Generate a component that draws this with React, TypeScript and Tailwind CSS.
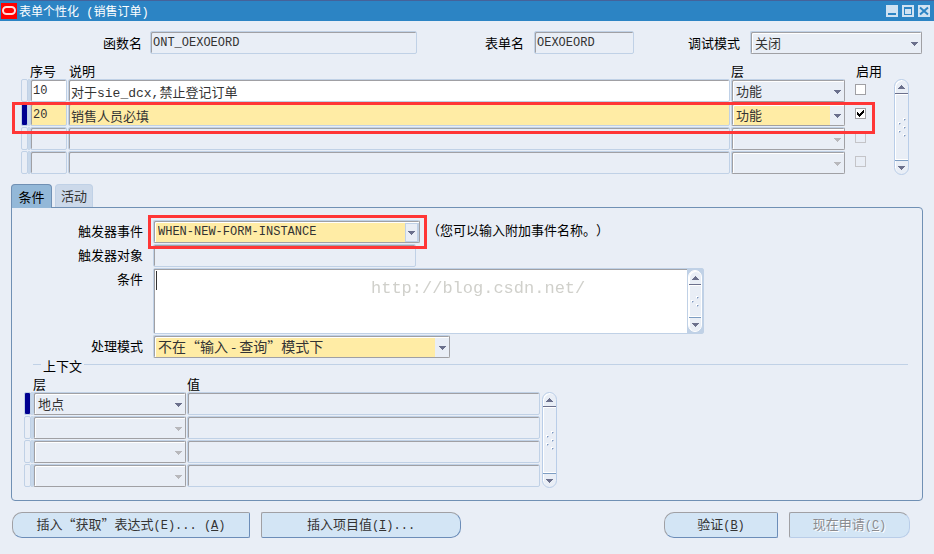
import React, { useState } from 'react'
import clsx from 'clsx'

interface IRule {
  id: number
  seq: string
  description: string
  level: string
  enabled: boolean
}

const rules: IRule[] = [
  { id: 1, seq: '10', description: '对于sie_dcx,禁止登记订单', level: '功能', enabled: false },
  { id: 2, seq: '20', description: '销售人员必填', level: '功能', enabled: true },
  { id: 3, seq: '', description: '', level: '', enabled: false },
  { id: 4, seq: '', description: '', level: '', enabled: false },
]

const contexts = ['地点', '', '', '']

const cjk = "font-['Noto_Sans_CJK_SC',sans-serif] text-[13px]"
const cjkWide = "font-['Noto_Sans_CJK_SC',sans-serif] text-[14px]"
const mono = "font-['Liberation_Mono','Noto_Sans_CJK_SC',monospace] text-[12px]"
const monoWide = "font-['Liberation_Mono','Noto_Sans_CJK_SC',monospace] text-[13px]"

const fieldStyle =
  'block h-[23px] w-full rounded-[2px] border border-[#c0d1e6] pt-px pb-0 pl-[2px] text-[#333] shadow-[inset_1px_1px_0_#a0a0a4] outline-none'

interface FieldProps extends React.InputHTMLAttributes<HTMLInputElement> {
  font?: string
  bg?: string
}

function Field({ font = mono, bg = 'bg-transparent', ...props }: FieldProps) {
  return <input type="text" className={clsx(fieldStyle, font, bg)} {...props} />
}

interface DropDownProps {
  id?: string
  label?: string
  value: string
  font?: string
  highlight?: boolean
  combo?: boolean
  disabled?: boolean
}

function DropDown({ id, label, value, font = cjk, highlight, combo, disabled }: DropDownProps) {
  return (
    <div className="relative w-full">
      <select
        id={id}
        aria-label={label}
        disabled={disabled}
        defaultValue={value}
        className={clsx(
          'block h-[23px] w-full appearance-none rounded-[2px] border border-t-[#c0d1e6] border-r-[#a0a0a4] border-b-[#a0a0a4] border-l-[#c0d1e6] py-0 pl-[4px] text-[#333] shadow-[inset_1px_1px_0_#a0a0a4,inset_2px_2px_0_#fff] outline-none disabled:opacity-100',
          font,
          highlight ? 'bg-[#ffeca5]' : 'bg-[#e9eef6]',
        )}
      >
        <option value={value}>{value}</option>
      </select>
      <span
        className={clsx(
          'pointer-events-none absolute top-[3px] right-px bottom-px flex w-[14px] items-center justify-center',
          combo ? 'border border-r-2 border-[#c0d1e6] bg-[#e9eef6]' : 'bg-[#e9eef6]',
        )}
      >
        <Arrow color={disabled ? 'fill-[#b8b8bc]' : 'fill-[#6b708c]'} />
      </span>
    </div>
  )
}

function Arrow({ up, color = 'fill-[#6b708c]' }: { up?: boolean; color?: string }) {
  return (
    <svg viewBox="0 0 7 4" className={clsx('h-[4px] w-[7px] shrink-0', color)} shapeRendering="crispEdges">
      {up ? <path d="M3 0h1v1h1v1h1v1h1v1H0V3h1V2h1V1h1z" /> : <path d="M0 0h7v1H6v1H5v1H4v1H3V3H2V2H1V1H0z" />}
    </svg>
  )
}

function Grip({ rows }: { rows: number[][] }) {
  return (
    <svg viewBox="0 0 8 19" className="h-[19px] w-[8px]" shapeRendering="crispEdges">
      {rows.map(([x, y]) => (
        <g key={`${x}-${y}`}>
          <path d={`M${x} ${y}h2v2h-2z`} fill="#fff" />
          <path d={`M${x + 1} ${y + 1}h1v1h-1z`} fill="#7f98c0" />
          <path d={`M${x + 2} ${y + 1}h1v1h-1z M${x + 1} ${y + 2}h1v1h-1z`} fill="#b9c8de" />
        </g>
      ))}
    </svg>
  )
}

const longGrip = [[5, 0], [0, 4], [5, 8], [0, 12], [5, 16]]
const shortGrip = [[5, 4], [0, 8], [5, 12]]

function ScrollBar({ short }: { short?: boolean }) {
  return (
    <div
      className={clsx(
        'flex shrink-0 flex-col overflow-hidden rounded-full border bg-[#e9eef6] shadow-[inset_1px_1px_0_#fff]',
        short ? 'h-full w-[14px] border-white' : 'h-[96px] w-[15px] border-[#b9cde8]',
      )}
    >
      <button type="button" aria-label="向上滚动" className="flex h-[14px] w-full items-center justify-center border-b border-[#6b708c]">
        <Arrow up />
      </button>
      <div className="flex flex-1 items-center justify-center border-t border-b border-white">
        <Grip rows={short ? shortGrip : longGrip} />
      </div>
      <button type="button" aria-label="向下滚动" className="flex h-[14px] w-full items-center justify-center border-t border-[#7d9dc2]">
        <Arrow />
      </button>
    </div>
  )
}

function Marker({ active }: { active?: boolean }) {
  return (
    <div className="h-[23px] w-[9px] border-r-2 border-[#c8d8ea]">
      <div
        className={clsx(
          'h-[23px] w-[7px] rounded-[2px] border border-[#c0d1e6]',
          active && 'bg-[#000090]',
        )}
      />
    </div>
  )
}

function RulesTable() {
  const [enabled, setEnabled] = useState<boolean[]>(rules.map((rule) => rule.enabled))

  const handleToggle = (index: number) => {
    setEnabled(enabled.map((value, i) => (i === index ? !value : value)))
  }

  return (
    <div className="relative min-w-0 flex-1">
      <table className="w-full table-fixed border-collapse">
        <colgroup>
          <col className="w-[9px]" />
          <col className="w-[38px]" />
          <col />
          <col className="w-[115px]" />
          <col className="w-[29px]" />
        </colgroup>
        <thead>
          <tr className="h-[17px] text-left leading-[17px] whitespace-nowrap">
            <td className="p-0" />
            <th className="p-0 font-normal">序号</th>
            <th className="p-0 pl-px font-normal">说明</th>
            <th className="p-0 font-normal">层</th>
            <th className="p-0 pl-[10px] font-normal">启用</th>
          </tr>
        </thead>
        <tbody>
          {rules.map((rule, index) => {
            const empty = rule.seq === ''
            const current = rule.id === 2
            const bg = empty ? 'bg-transparent' : current ? 'bg-[#ffeca5]' : 'bg-white'
            return (
              <tr key={rule.id} className="h-[24px] align-top">
                <td className="p-0"><Marker active={current} /></td>
                <td className="p-0 pr-px"><Field aria-label="序号" defaultValue={rule.seq} bg={bg} /></td>
                <td className="p-0 pr-px"><Field aria-label="说明" defaultValue={rule.description} bg={bg} font={monoWide} /></td>
                <td className="p-0 pr-px">
                  <DropDown label="层" value={rule.level} highlight={current} disabled={empty} />
                </td>
                <td className="p-0 pt-[5px] pl-[9px]">
                  <label className="relative block size-[11px]">
                    <input
                      type="checkbox"
                      aria-label="启用"
                      checked={enabled[index]}
                      disabled={empty}
                      onChange={() => handleToggle(index)}
                      className="block size-[11px] appearance-none border border-[#a0a0a4] bg-white disabled:border-[#c4c4c8] disabled:bg-transparent"
                    />
                    {enabled[index] && (
                      <svg viewBox="0 0 11 11" className="pointer-events-none absolute inset-0 size-[11px]" shapeRendering="crispEdges">
                        <path d="M2 4h1v1h1v1h1V5h1V4h1V3h1V2h1v3H8v1H7v1H6v1H5v1H4V8H3V7H2z" />
                      </svg>
                    )}
                  </label>
                </td>
              </tr>
            )
          })}
        </tbody>
      </table>
      {/* Marks the current record */}
      <div className="pointer-events-none absolute top-[40px] right-0 -left-[9px] h-[32px] border-[3px] border-[#ff3636]" />
    </div>
  )
}

function ContextTable() {
  return (
    <table className="w-[517px] table-fixed border-collapse">
      <colgroup>
        <col className="w-[9px]" />
        <col className="w-[154px]" />
        <col />
      </colgroup>
      <thead>
        <tr className="h-[17px] text-left leading-[17px]">
          <td className="p-0" />
          <th className="p-0 font-normal">层</th>
          <th className="p-0 font-normal">值</th>
        </tr>
      </thead>
      <tbody>
        {contexts.map((level, index) => (
          <tr key={index} className="h-[24px] align-top">
            <td className="p-0"><Marker active={index === 0} /></td>
            <td className="p-0 pr-px"><DropDown label="层" value={level} disabled={!level} /></td>
            <td className="p-0 pr-px"><Field aria-label="值" /></td>
          </tr>
        ))}
      </tbody>
    </table>
  )
}

const buttonStyle =
  'h-[26px] border border-t-[#a0a0a4] border-l-[#a0a0a4] border-r-[#6c8db8] border-b-[#6c8db8] bg-[#d3e5f5] text-center leading-[22px] whitespace-nowrap text-[#333]'

export default function App() {
  const [condition, setCondition] = useState('')

  return (
    <div className={clsx('min-h-screen bg-[#e9eef6] text-black', cjk)}>
      <header className="flex h-[21px] items-center border-t border-[#45629a] bg-[#2c84c4] pr-[4px] pl-px text-[12px] text-white">
        <svg viewBox="0 0 16 16" className="size-[16px]">
          <rect width="16" height="16" fill="#f00" />
          <rect x="2" y="4" width="12" height="7" rx="3.5" fill="none" stroke="#ffdcdc" strokeWidth="2" />
        </svg>
        <h1 className="ml-[2px] flex-1 pt-[2px]">
          表单个性化<span className={mono}> (</span>销售订单<span className={mono}>)</span>
        </h1>
        <div className="flex gap-1">
          <button type="button" aria-label="最小化" className="size-[12px] bg-[#d0e2f2]">
            <svg viewBox="0 0 12 12" className="size-[12px]"><path d="M2 8h8v2H2z" fill="#2c84c4" /></svg>
          </button>
          <button type="button" aria-label="最大化" className="size-[12px] bg-[#d0e2f2]">
            <svg viewBox="0 0 12 12" className="size-[12px]"><path d="M2 2h8v8H2zM3 4v5h6V4z" fillRule="evenodd" fill="#2c84c4" /></svg>
          </button>
          <button type="button" aria-label="关闭" className="size-[12px] bg-[#d0e2f2]">
            <svg viewBox="0 0 12 12" className="size-[12px]"><path d="M2 2.5l8 7M10 2.5l-8 7" stroke="#2c84c4" strokeWidth="2" /></svg>
          </button>
        </div>
      </header>

      <main className="px-[11px] pt-[10px]">
        <div className="flex h-[23px] items-center pr-px whitespace-nowrap">
          <label htmlFor="function" className="w-[131px] text-right">函数名</label>
          <div className="ml-2 w-[267px]"><Field id="function" defaultValue="ONT_OEXOEORD" readOnly /></div>
          <label htmlFor="form" className="ml-[68px]">表单名</label>
          <div className="ml-[10px] w-[100px]"><Field id="form" defaultValue="OEXOEORD" readOnly /></div>
          <label htmlFor="debug" className="ml-auto">调试模式</label>
          <div className="ml-[10px] w-[172px]"><DropDown id="debug" value="关闭" /></div>
        </div>

        <div className="mt-2 flex items-end pr-[14px] pl-[10px]">
          <RulesTable />
          <div className="ml-[19px]"><ScrollBar /></div>
        </div>

        <div className="mt-[9px] flex h-[23px] gap-[3px]" role="tablist">
          <button type="button" role="tab" aria-selected="true" className="h-[24px] w-[41px] rounded-t-[4px] border border-b-0 border-[#7090b4] bg-[#93b8d8]">
            条件
          </button>
          <button type="button" role="tab" aria-selected="false" className="w-[38px] rounded-t-[4px] border border-b-0 border-[#c0d1e6] bg-[#ccd9ea] text-[#333]">
            活动
          </button>
        </div>

        <section className="rounded-[4px] rounded-tl-none border border-[#7090b4] pt-[12px] pb-[12px]">
          <div className="grid grid-cols-[131px_1fr] gap-x-[10px] gap-y-px">
            <label htmlFor="event" className="text-right leading-[22px]">触发器事件</label>
            <div className="flex">
              <div className="relative w-[267px]">
                <DropDown id="event" value="WHEN-NEW-FORM-INSTANCE" font={mono} highlight combo />
                <div className="pointer-events-none absolute -top-[5px] -right-[7px] -bottom-[6px] -left-[5px] z-10 border-[3px] border-[#ff3636]" />
              </div>
              <p className="ml-[7px] leading-[20px] [text-spacing-trim:space-all]">（您可以输入附加事件名称。）</p>
            </div>

            <label htmlFor="object" className="text-right leading-[22px]">触发器对象</label>
            <div className="w-[263px]"><Field id="object" /></div>

            <label htmlFor="condition" className="text-right leading-[22px]">条件</label>
            <div className="relative flex h-[66px] w-[551px] rounded-[2px] border border-[#c0d1e6] bg-white">
              <textarea
                id="condition"
                autoFocus
                value={condition}
                onChange={(event) => setCondition(event.target.value)}
                className={clsx('flex-1 resize-none border-t border-l border-[#a0a0a4] pt-px pl-px outline-none', mono)}
              />
              <div className="h-full bg-[#c0d1e6] p-px"><ScrollBar short /></div>
              {/* Text cursor and watermark over the text area */}
              <span className="pointer-events-none absolute top-[2px] left-[2px] h-[19px] w-px bg-[#333]" />
              <span className="pointer-events-none absolute top-[8px] left-[217px] font-['Liberation_Mono',monospace] text-[17px] leading-[24px] text-[#d0d0cb]">
                http://blog.csdn.net/
              </span>
            </div>

            <label htmlFor="mode" className="text-right leading-[22px]">处理模式</label>
            <div className="w-[297px]"><DropDown id="mode" value="不在“输入 - 查询”模式下" font={cjkWide} highlight /></div>
          </div>

          <fieldset className="mr-[14px] ml-[21px] min-w-0 border-t border-[#c0d1e6]">
            <legend className="ml-[8px] h-3 px-[2px] leading-4">上下文</legend>
            <div className="-ml-[9px] mt-[5px] flex items-end gap-px">
              <ContextTable />
              <ScrollBar />
            </div>
          </fieldset>
        </section>

        <footer className="mt-[11px] flex pr-[13px] pl-px">
          <button type="button" className={clsx(buttonStyle, 'w-[238px] rounded-l-[10px] rounded-r-[2px]')}>
            插入“获取”表达式<span className={mono}>(E)... (<u>A</u>)</span>
          </button>
          <button type="button" className={clsx(buttonStyle, 'ml-[11px] w-[200px] rounded-l-[2px] rounded-r-[10px]')}>
            插入项目值<span className={mono}>(<u>I</u>)...</span>
          </button>
          <button type="button" className={clsx(buttonStyle, 'ml-auto w-[114px] rounded-l-[10px] rounded-r-[2px]')}>
            验证<span className={mono}>(<u>B</u>)</span>
          </button>
          <button
            type="button"
            disabled
            className="ml-[11px] h-[26px] w-[121px] rounded-l-[2px] rounded-r-[10px] border border-t-[#a0a0a4] border-r-[#b9cde8] border-b-[#b9cde8] border-l-[#a0a0a4] bg-[#d3e5f5] leading-[22px] whitespace-nowrap text-[#8c8c90] [text-shadow:1px_1px_0_#fff]"
          >
            现在申请<span className={mono}>(<u>C</u>)</span>
          </button>
        </footer>
      </main>
    </div>
  )
}
